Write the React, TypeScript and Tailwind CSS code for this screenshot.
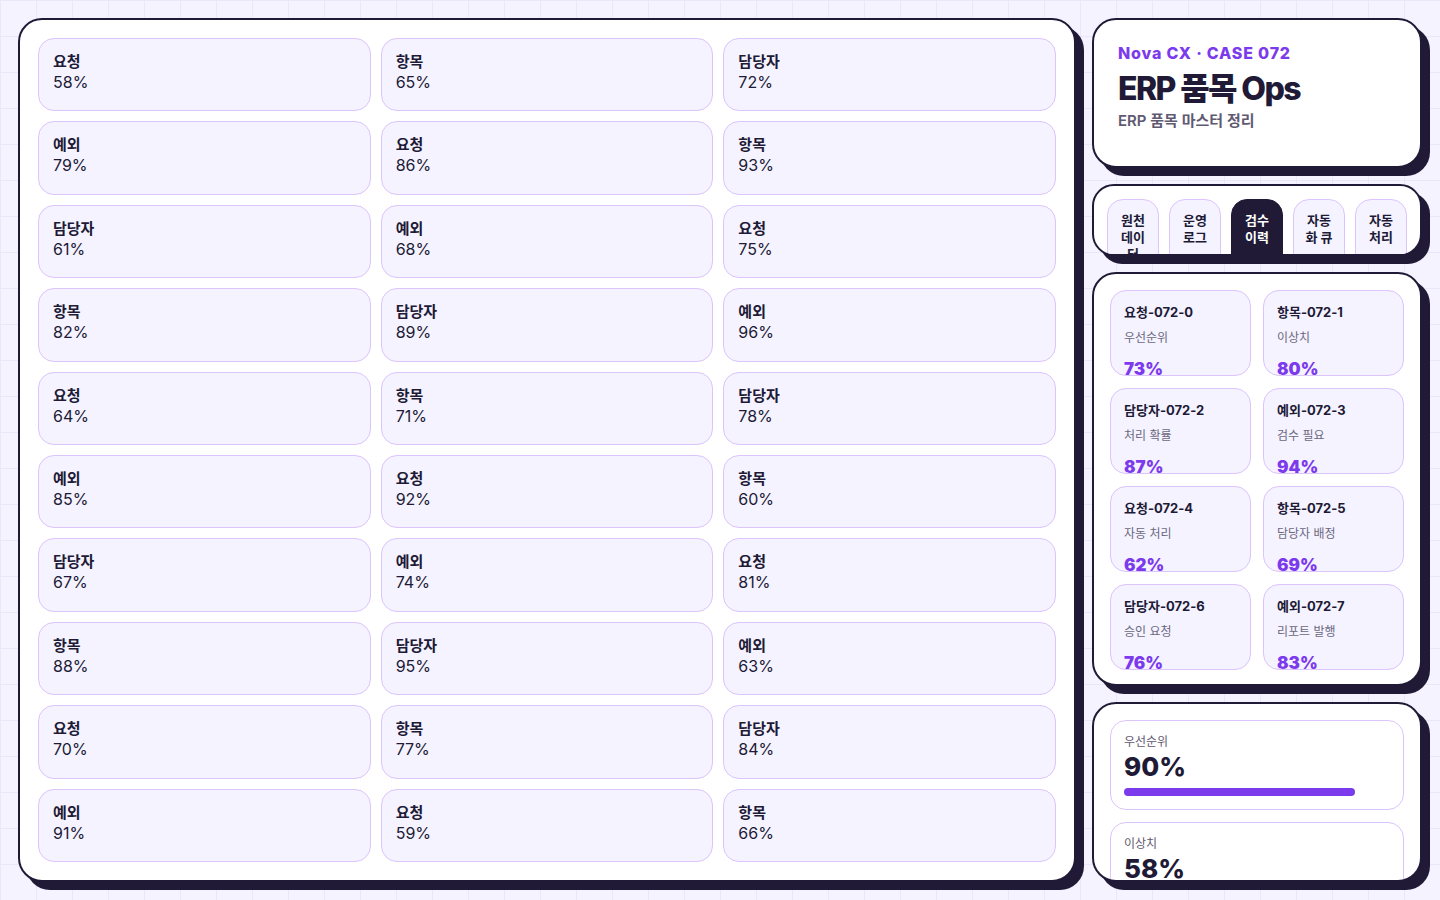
const labels = ["요청", "항목", "담당자", "예외"];
const values = [
  58, 65, 72, 79, 86, 93, 61, 68, 75, 82, 89, 96, 64, 71, 78, 85, 92, 60, 67, 74,
  81, 88, 95, 63, 70, 77, 84, 91, 59, 66,
];

const tabs = [
  { name: "원천 데이터", active: false },
  { name: "운영 로그", active: false },
  { name: "검수 이력", active: true },
  { name: "자동화 큐", active: false },
  { name: "자동 처리", active: false },
];

const records = [
  { id: "요청-072-0", sub: "우선순위", pct: 73 },
  { id: "항목-072-1", sub: "이상치", pct: 80 },
  { id: "담당자-072-2", sub: "처리 확률", pct: 87 },
  { id: "예외-072-3", sub: "검수 필요", pct: 94 },
  { id: "요청-072-4", sub: "자동 처리", pct: 62 },
  { id: "항목-072-5", sub: "담당자 배정", pct: 69 },
  { id: "담당자-072-6", sub: "승인 요청", pct: 76 },
  { id: "예외-072-7", sub: "리포트 발행", pct: 83 },
];

const metrics = [
  { label: "우선순위", value: 90 },
  { label: "이상치", value: 58 },
];

const font = { fontFamily: "Inter, 'Noto Sans CJK KR', sans-serif" };

function App() {
  return (
    <div
      style={font}
      className="w-[1440px] h-[900px] p-[18px] flex gap-4 text-[#201a36] bg-[#f5f3ff] bg-[linear-gradient(to_right,#ebe7fa_1px,transparent_1px),linear-gradient(to_bottom,#ebe7fa_1px,transparent_1px)] bg-[size:36px_36px]"
    >
      {/* Main grid */}
      <div className="w-[1058px] h-[864px] bg-white border-2 border-[#201a36] rounded-[24px] shadow-[8px_8px_0_#201a36] p-[18px] grid grid-cols-3 grid-rows-10 gap-[10px]">
        {values.map((v, i) => (
          <div
            key={i}
            className="bg-[#f5f3ff] border border-[#dcc4fd] rounded-2xl px-[14px] py-[12px]"
          >
            <div className="text-[15px] font-bold leading-[21px]">{labels[i % 4]}</div>
            <div className="text-[16px] leading-[21px]">{v}%</div>
          </div>
        ))}
      </div>

      {/* Side column */}
      <div className="w-[330px] flex flex-col gap-4">
        <div className="h-[150px] bg-white border-2 border-[#201a36] rounded-[24px] shadow-[8px_8px_0_#201a36] px-6 pt-[23px]">
          <div className="text-[16px] leading-[20px] font-extrabold tracking-[0.05em] text-[#7c3aed]">
            Nova CX · CASE 072
          </div>
          <div className="mt-[7px] text-[32px] leading-[38px] font-extrabold tracking-[-0.05em]">
            ERP 품목 Ops
          </div>
          <div className="mt-[3px] text-[15px] leading-[20px] font-semibold text-[#5f5a72]">
            ERP 품목 마스터 정리
          </div>
        </div>

        <div className="h-[72px] bg-white border-2 border-[#201a36] rounded-[22px] shadow-[8px_8px_0_#201a36] px-[13px] pt-[13px] overflow-hidden">
          <div className="flex gap-[10px]">
            {tabs.map((t) => (
              <div
                key={t.name}
                className={
                  t.active
                    ? "w-[52px] h-[80px] shrink-0 rounded-t-2xl bg-[#201a36] text-white border border-[#201a36] px-[8px] pt-[12px] text-center text-[13px] font-bold leading-[17px]"
                    : "w-[52px] h-[80px] shrink-0 rounded-t-2xl bg-[#f5f3ff] border border-[#dcc4fd] px-[8px] pt-[12px] text-center text-[13px] font-bold leading-[17px]"
                }
              >
                {t.name}
              </div>
            ))}
          </div>
        </div>

        <div className="h-[414px] bg-white border-2 border-[#201a36] rounded-[24px] shadow-[8px_8px_0_#201a36] p-4 grid grid-cols-2 grid-rows-[repeat(4,86px)] gap-3">
          {records.map((r) => (
            <div
              key={r.id}
              className="bg-[#f5f3ff] border border-[#dcc4fd] rounded-2xl px-[13px] pt-[12px] overflow-hidden"
            >
              <div className="text-[13px] leading-[18px] font-bold">{r.id}</div>
              <div className="mt-[9px] text-[12px] leading-[16px] text-[#6b6880]">{r.sub}</div>
              <div className="mt-[12px] text-[17px] leading-[22px] font-black text-[#7c3aed]">
                {r.pct}%
              </div>
            </div>
          ))}
        </div>

        <div className="flex-1 min-h-0 bg-white border-2 border-[#201a36] rounded-[24px] shadow-[8px_8px_0_#201a36] p-4 overflow-hidden flex flex-col gap-3">
          {metrics.map((m) => (
            <div
              key={m.label}
              className="shrink-0 h-[90px] border border-[#dcc4fd] rounded-2xl px-[13px] pt-[13px]"
            >
              <div className="text-[12px] leading-[16px] text-[#5f5a72]">{m.label}</div>
              <div className="mt-[2px] text-[26px] leading-[30px] font-extrabold">{m.value}%</div>
              <div className="mt-[6px] w-[257px] h-2">
                <div
                  className="h-2 rounded-full bg-[#7c3aed]"
                  style={{ width: `${m.value}%` }}
                />
              </div>
            </div>
          ))}
        </div>
      </div>
    </div>
  );
}

export default App;
